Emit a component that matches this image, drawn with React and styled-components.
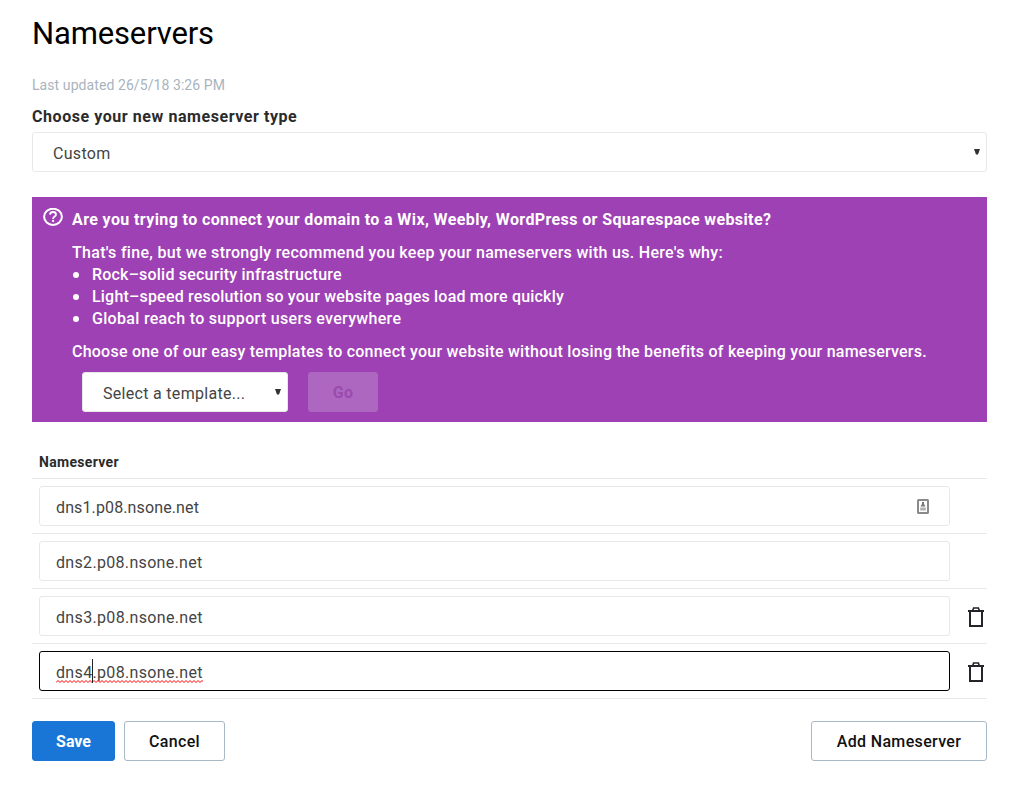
import React from "react";
import styled, { createGlobalStyle } from "styled-components";

const GlobalStyle = createGlobalStyle`
  *, *::before, *::after { box-sizing: border-box; }
  body {
    margin: 0;
    background: #fff;
    color: #2b2b2b;
    font-family: Roboto, "Liberation Sans", sans-serif;
    font-size: 16px;
    line-height: 22px;
  }
`;

const Page = styled.main`
  width: 955px;
  margin-left: 32px;
  padding-top: 14px;
`;

const Label = styled.span`
  white-space: nowrap;
  letter-spacing: ${(p) => p.$track || 0}px;
`;

const Title = styled.h1`
  margin: 0;
  font-size: 31px;
  font-weight: 400;
  line-height: 40px;
  color: #000;
`;

const Updated = styled.p`
  margin: 21px 0 0;
  font-size: 14px;
  line-height: 20px;
  color: #a9b4be;
`;

const FieldLabel = styled.div`
  margin: 11px 0 4px;
  font-weight: 700;
`;

const Select = styled.div`
  display: flex;
  align-items: center;
  justify-content: space-between;
  width: ${(p) => p.$width || "100%"};
  height: 40px;
  padding: 4px 6px 0 20px;
  border: 1px solid #e8e8e8;
  border-radius: 3px;
  background: #fff;
  color: #444;
`;

const Caret = styled.svg`
  width: 6px;
  height: 6px;
  margin-top: -4px;
`;

const Notice = styled.section`
  display: flex;
  height: 225px;
  margin-top: 25px;
  padding: 12px 10px 0;
  background: #9e41b5;
  color: #fff;
`;

const NoticeIcon = styled.svg`
  flex: none;
  width: 22px;
  height: 20px;
  margin: -1px 8px 0 0;
`;

const NoticeBody = styled.div`
  flex: 1;
  font-weight: 500;
`;

const NoticeTitle = styled.div`
  font-weight: 700;
  margin-bottom: 11px;
`;

const Bullets = styled.ul`
  margin: 0 0 11px;
  padding: 0;
  list-style: none;
`;

const Bullet = styled.li`
  display: flex;
  align-items: center;
  &::before {
    content: "";
    width: 6px;
    height: 6px;
    margin: 0 13px 0 1px;
    border-radius: 50%;
    background: #fff;
  }
`;

const TemplateRow = styled.div`
  display: flex;
  gap: 20px;
  margin: 9px 0 0 10px;
  font-weight: 400;
`;

const Button = styled.button`
  display: flex;
  align-items: center;
  justify-content: center;
  width: ${(p) => p.$width}px;
  height: 40px;
  padding: 2px 0 0;
  border: 1px solid ${(p) => p.$border};
  border-radius: 3px;
  background: ${(p) => p.$fill};
  color: ${(p) => p.$color};
  font: ${(p) => p.$weight || 500} 16px/22px Roboto, "Liberation Sans", sans-serif;
`;

const TableHead = styled.div`
  height: 57px;
  padding: 30px 0 0 7px;
  border-bottom: 1px solid #e8e8e8;
  font-size: 14px;
  line-height: 20px;
  font-weight: 700;
`;

const Row = styled.div`
  display: flex;
  align-items: center;
  height: 55px;
  padding: 0 3px 0 7px;
  border-bottom: 1px solid #e8e8e8;
`;

const Input = styled.div`
  display: flex;
  align-items: center;
  justify-content: space-between;
  width: 911px;
  height: 40px;
  padding: 4px 20px 0 16px;
  border: 1px solid ${(p) => (p.$focused ? "#000" : "#e8e8e8")};
  border-radius: 3px;
  color: #444;
`;

const Misspelled = styled(Label)`
  position: relative;
`;

const Squiggle = styled.svg`
  position: absolute;
  left: 0;
  bottom: 1px;
  width: 147px;
  height: 3px;
`;

const TextCursor = styled.span`
  position: absolute;
  left: 36px;
  top: -3px;
  width: 1px;
  height: 24px;
  background: #222;
`;

const ContactIcon = styled.svg`
  width: 12px;
  height: 15px;
  margin-top: -4px;
`;

const Trash = styled.svg`
  width: 16px;
  height: 20px;
  margin: 2px 0 0 auto;
`;

const Actions = styled.footer`
  display: flex;
  gap: 9px;
  margin-top: 22px;
  & > :last-child { margin-left: auto; }
`;

const Arrow = () => (
  <Caret viewBox="0 0 6 6">
    <path d="M0 0h6L4 5.5H2Z" fill="#333" />
  </Caret>
);

const TrashIcon = () => (
  <Trash viewBox="0 0 16 20" fill="none" stroke="#26232b">
    <path d="M0 4h16M2 4v15h12V4" strokeWidth="2" />
    <path d="M4.7 3.5 5.6 1h4.8l.9 2.5" strokeWidth="1.6" />
  </Trash>
);

const servers = [
  { name: "dns1.p08.nsone.net", track: 0.12, contact: true },
  { name: "dns2.p08.nsone.net", track: 0.32 },
  { name: "dns3.p08.nsone.net", track: 0.34, removable: true },
  { name: "dns4.p08.nsone.net", track: 0.34, removable: true, focused: true },
];

const wave = "M0 2.5" + Array.from({ length: 37 }, () => "l2 -2l2 2").join("");

export default function App() {
  return (
    <>
      <GlobalStyle />
      <Page>
        <Title><Label $track={-0.15}>Nameservers</Label></Title>
        <Updated><Label $track={0.08}>Last updated 26/5/18 3:26 PM</Label></Updated>
        <FieldLabel><Label $track={0.56}>Choose your new nameserver type</Label></FieldLabel>
        <Select><Label $track={0.3}>Custom</Label><Arrow /></Select>

        <Notice>
          <NoticeIcon viewBox="0 0 22 20" fill="none" stroke="#fff">
            <ellipse cx="11" cy="8.8" rx="8.9" ry="8.1" strokeWidth="2" />
            <path d="M8 6.6C8.1 4.8 9.3 4 11 4s3 .9 3 2.5c0 2.1-2.9 2.1-2.9 4.4" strokeWidth="1.8" />
            <circle cx="11.1" cy="13" r="1.15" fill="#fff" stroke="none" />
          </NoticeIcon>
          <NoticeBody>
            <NoticeTitle>
              <Label $track={0.385}>Are you trying to connect your domain to a Wix, Weebly, WordPress or Squarespace website?</Label>
            </NoticeTitle>
            <Label $track={0.295}>That's fine, but we strongly recommend you keep your nameservers with us. Here's why:</Label>
            <Bullets>
              <Bullet><Label $track={0.2}>Rock–solid security infrastructure</Label></Bullet>
              <Bullet><Label $track={0.2}>Light–speed resolution so your website pages load more quickly</Label></Bullet>
              <Bullet><Label $track={0.31}>Global reach to support users everywhere</Label></Bullet>
            </Bullets>
            <Label $track={0.235}>Choose one of our easy templates to connect your website without losing the benefits of keeping your nameservers.</Label>
            <TemplateRow>
              <Select $width="206px"><Label $track={0.3}>Select a template...</Label><Arrow /></Select>
              <Button $width={70} $border="#ae67c1" $fill="#ae67c1" $color="#9a4bae" $weight={700}><Label $track={0.4}>Go</Label></Button>
            </TemplateRow>
          </NoticeBody>
        </Notice>

        <TableHead><Label $track={0.32}>Nameserver</Label></TableHead>
        {servers.map((s) => (
          <Row key={s.name}>
            <Input $focused={s.focused}>
              {s.focused ? (
                <Misspelled $track={s.track}>
                  {s.name}
                  <Squiggle viewBox="0 0 147 3"><path d={wave} fill="none" stroke="#f00" /></Squiggle>
                  <TextCursor />
                </Misspelled>
              ) : (
                <Label $track={s.track}>{s.name}</Label>
              )}
              {s.contact && (
                <ContactIcon viewBox="0 0 12 15">
                  <rect x="1" y="1" width="10" height="13" rx="0.5" fill="#fff" stroke="#8a8a8a" strokeWidth="2" />
                  <path d="M5 3h2v2l1.5 2.5h-5L5 5Z" fill="#777" />
                  <path d="M3.2 8.5h5.6v3H3.2Z" fill="#b0b0b0" />
                </ContactIcon>
              )}
            </Input>
            {s.removable && <TrashIcon />}
          </Row>
        ))}

        <Actions>
          <Button $width={83} $border="#1976d7" $fill="#1976d7" $color="#fff" $weight={700}><Label>Save</Label></Button>
          <Button $width={101} $border="#a9b8c5" $fill="#fff" $color="#111"><Label $track={0.35}>Cancel</Label></Button>
          <Button $width={176} $border="#a9b8c5" $fill="#fff" $color="#111"><Label $track={0.34}>Add Nameserver</Label></Button>
        </Actions>
      </Page>
    </>
  );
}
